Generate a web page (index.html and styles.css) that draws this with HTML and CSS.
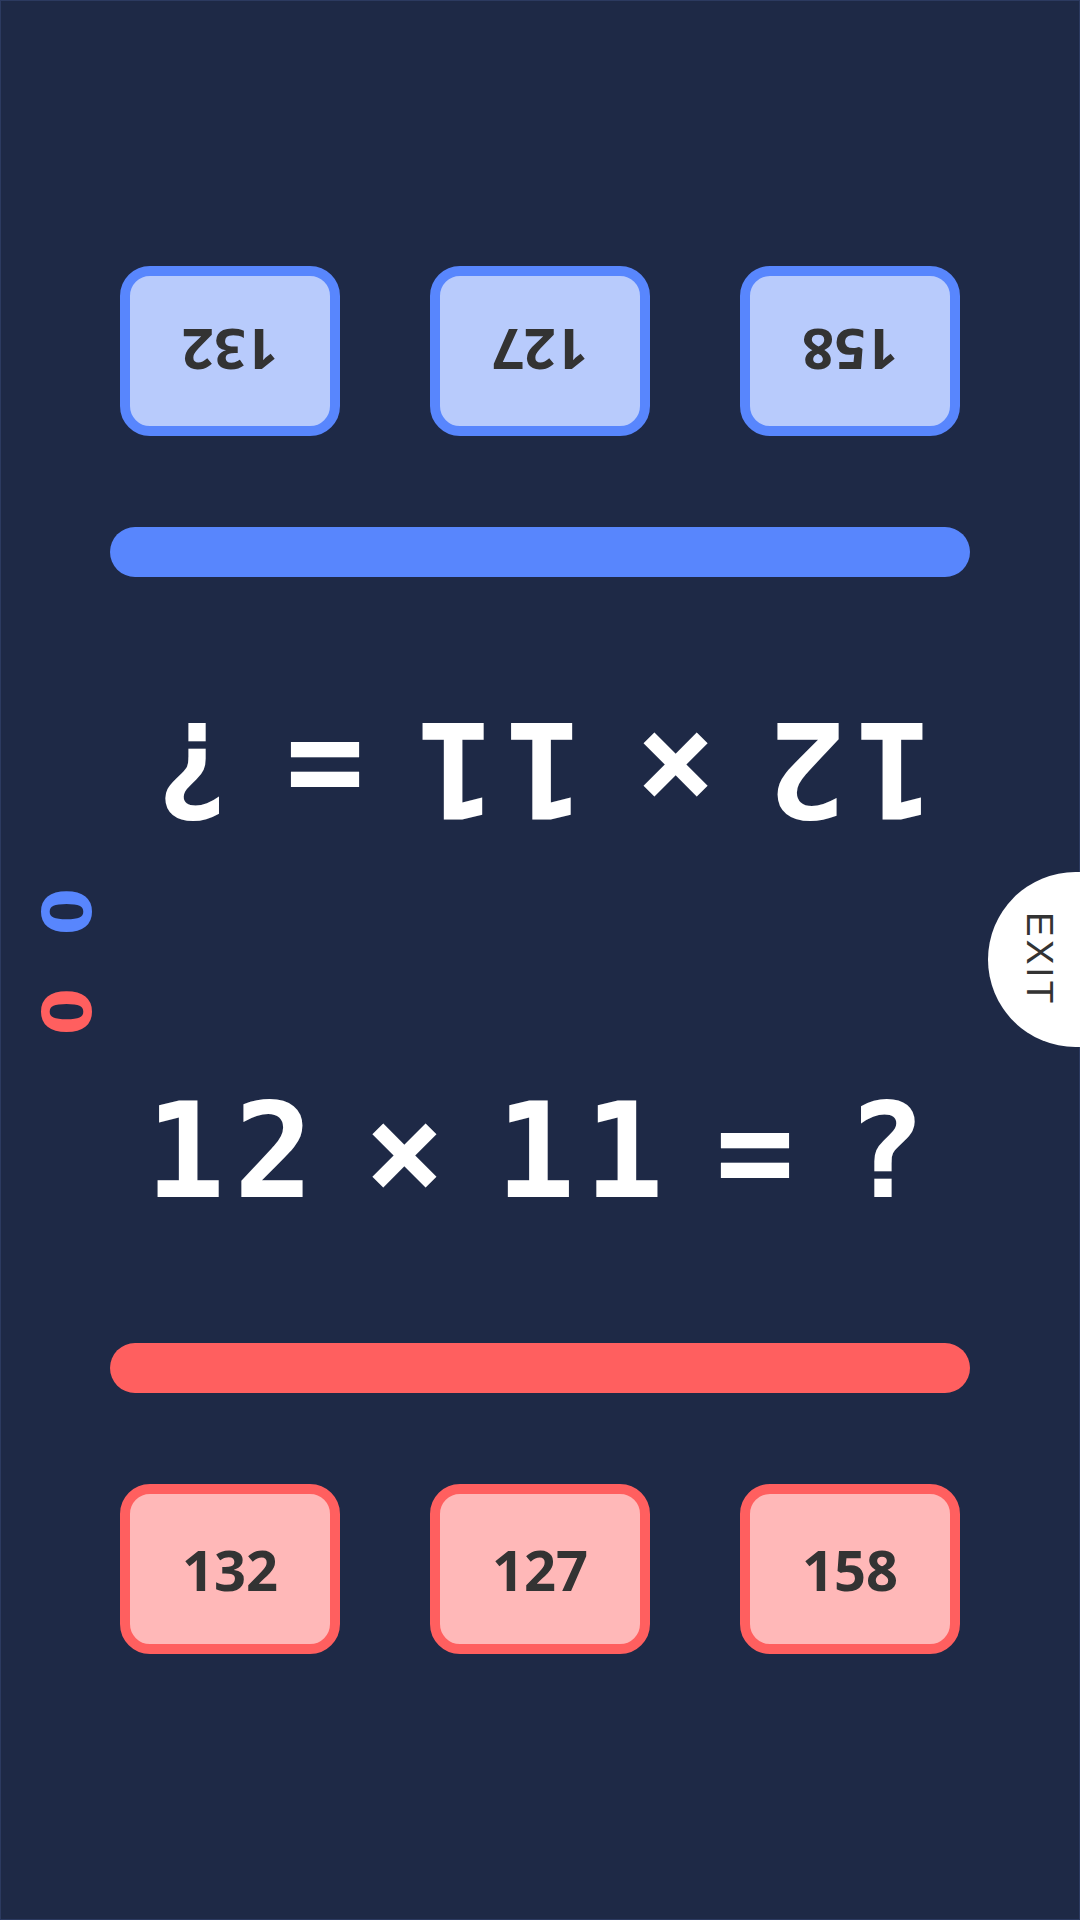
FILE: index.html
```html
<!DOCTYPE html>
<html lang="en">
<head>
    <meta charset="UTF-8">
    <meta name="viewport" content="width=device-width, initial-scale=1.0">
    <title>Times Duel</title>
    <link rel="stylesheet" href="styles.css">
</head>
<body>
    <div class="app">
        <!-- Player 2 (blue), turned to face the other side -->
        <div class="half half-top">
            <div class="equation">12 × 11 = ?</div>
            <div class="bar bar-blue"></div>
            <div class="answers">
                <div class="answer answer-blue">158</div>
                <div class="answer answer-blue">127</div>
                <div class="answer answer-blue">132</div>
            </div>
        </div>

        <!-- Player 1 (red) -->
        <div class="half half-bottom">
            <div class="equation">12 × 11 = ?</div>
            <div class="bar bar-red"></div>
            <div class="answers">
                <div class="answer answer-red">132</div>
                <div class="answer answer-red">127</div>
                <div class="answer answer-red">158</div>
            </div>
        </div>

        <!-- Scores -->
        <div class="scores">
            <div class="score score-blue">0</div>
            <div class="score score-red">0</div>
        </div>

        <button class="exit-btn"><span>EXIT</span></button>
    </div>
</body>
</html>
```
FILE: styles.css
```css
* {
    margin: 0;
    padding: 0;
    box-sizing: border-box;
}

body {
    background: #1e2946;
}

.app {
    position: relative;
    width: 1080px;
    height: 1920px;
    overflow: hidden;
    background: #1e2946;
    box-shadow: inset 0 0 0 1px #2c3a60;
}

.half {
    height: 960px;
    padding-top: 125px;
    display: flex;
    flex-direction: column;
    align-items: center;
}

.half-top {
    transform: rotate(180deg);
}

.equation {
    height: 132px;
    font-family: "DejaVu Sans Mono", monospace;
    font-weight: bold;
    font-size: 132px;
    line-height: 132px;
    letter-spacing: 9px;
    word-spacing: -46px;
    color: #ffffff;
    white-space: nowrap;
}

.bar {
    width: 860px;
    height: 50px;
    border-radius: 25px;
    margin-top: 126px;
}

.bar-blue {
    background: #5886fd;
}

.bar-red {
    background: #ff5f5f;
}

.answers {
    display: flex;
    gap: 90px;
    margin-top: 91px;
}

.answer {
    width: 220px;
    height: 170px;
    border: 10px solid;
    border-radius: 30px;
    display: flex;
    align-items: center;
    justify-content: center;
    font-family: "Open Sans", "Liberation Sans", sans-serif;
    font-weight: bold;
    font-size: 56px;
    color: #333333;
}

.answer-blue {
    background: #b8cbfc;
    border-color: #5886fd;
}

.answer-red {
    background: #ffb8b8;
    border-color: #ff5f5f;
}

.scores {
    position: absolute;
    left: 44px;
    top: 874px;
    display: flex;
    flex-direction: column;
    gap: 30px;
}

.score {
    width: 42px;
    height: 70px;
    font-family: "DejaVu Sans", sans-serif;
    font-weight: bold;
    font-size: 68px;
    line-height: 70px;
    text-align: center;
    transform: rotate(90deg);
}

.score-blue {
    color: #5886fd;
}

.score-red {
    color: #ff5f5f;
}

.exit-btn {
    position: absolute;
    left: 988px;
    top: 872px;
    width: 175px;
    height: 175px;
    border: none;
    border-radius: 50%;
    background: #ffffff;
    display: flex;
    align-items: center;
    justify-content: flex-start;
    padding-left: 33px;
    cursor: pointer;
}

.exit-btn span {
    writing-mode: vertical-rl;
    font-family: "Liberation Sans", Arial, sans-serif;
    font-size: 37px;
    line-height: 37px;
    letter-spacing: 3px;
    color: #333333;
}
```
